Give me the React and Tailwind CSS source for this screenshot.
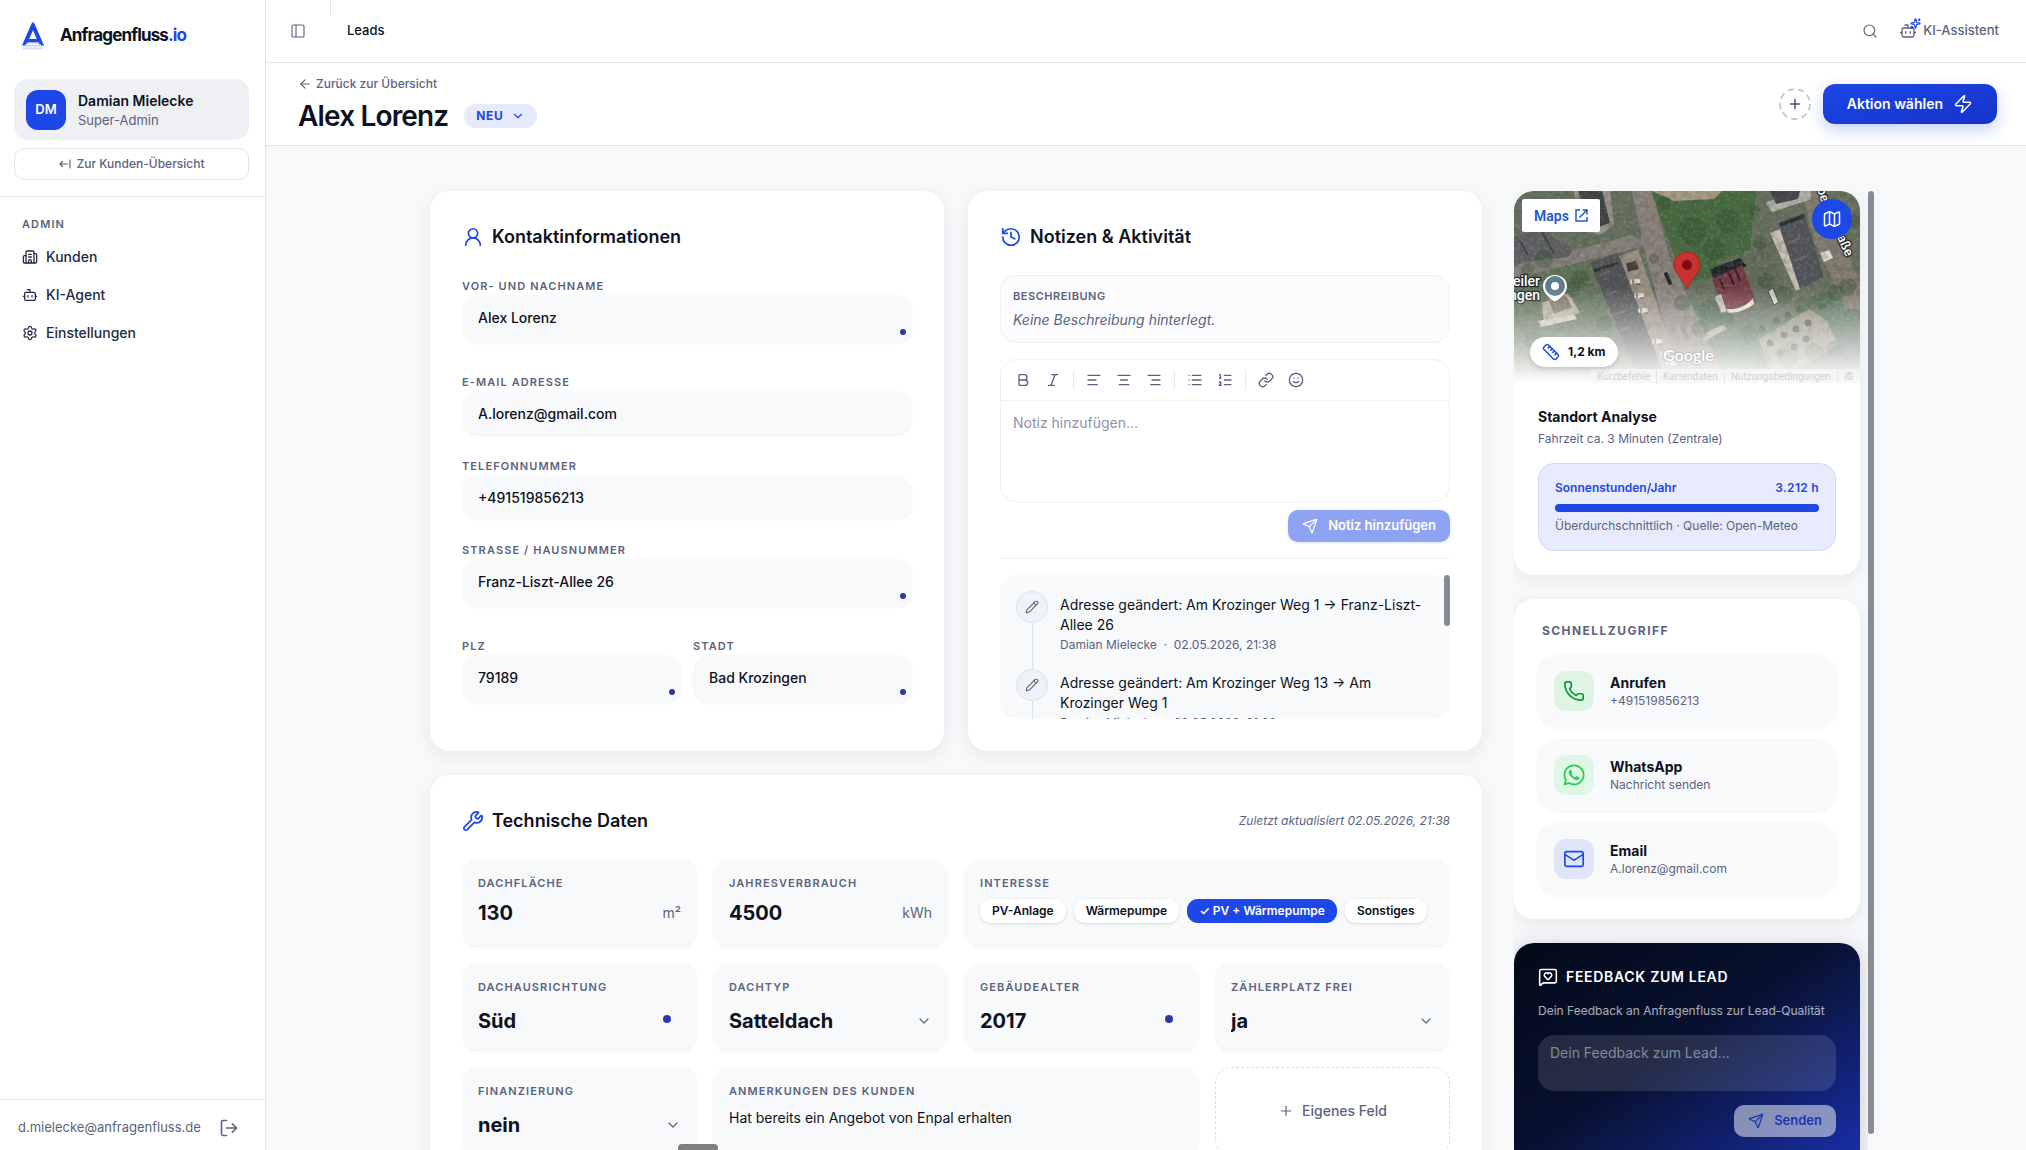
import React from "react";
import {
  AlignCenter, AlignLeft, AlignRight, ArrowLeft, Bold, Bot, Bug, Building2,
  ChevronDown, History, Italic, List, ListOrdered, Link as LinkIcon, LogOut, Mail,
  Map as MapIcon, MessageSquareHeart, PanelLeft, Pencil, Phone, Plus, Ruler, Search, Send,
  Settings, Smile, Sparkles, UserRound, Wrench, Zap,
} from "lucide-react";
import { FaWhatsapp } from "react-icons/fa";

const cardCls = "rounded-[20px] bg-white shadow-[0_4px_16px_rgba(15,23,42,0.07)]";
const labelCls = "block text-[11px] leading-4 font-semibold tracking-[0.1em] text-[#5a6380] uppercase";
const fieldLabelCls = "block pb-0.5 text-[11px] leading-[14px] font-semibold tracking-[0.1em] text-[#5a6380] uppercase";

function Logo() {
  return (
    <svg viewBox="0 0 22 28" className="h-7 w-[22px]" aria-hidden="true">
      <path d="M9.6 1.6 11 0l1.4 1.6L22 23.5h-4.6l-1-3H5.6l-1 3H0L9.6 1.6ZM11 8.2 7.2 17h7.6L11 8.2Z" fill="#1d47e6" fillRule="evenodd" />
      <path d="M4.5 20.6h13v.9h-13z" fill="#b9c6fa" />
      <path d="M3 22.3h16v1H3z" fill="#fff" />
      <path d="M2.5 23.4h17v1h-17z" fill="#a9b8f8" />
      <path d="M1 25.4h20v1.9H1z" fill="#d5ddfc" />
    </svg>
  );
}

function NavItem({ icon: Icon, children }) {
  return (
    <a href="#nav" className="flex h-[38px] items-center gap-2 px-2 text-sm font-medium text-[#232b40]">
      <Icon size={16} strokeWidth={1.9} />
      {children}
    </a>
  );
}

function Sidebar() {
  return (
    <aside className="flex w-[266px] shrink-0 flex-col border-r border-[#e2e4ec] bg-white">
      <div className="flex h-[71px] items-center gap-4 px-[22px]">
        <Logo />
        <span className="text-[17px] font-bold tracking-tighter text-[#0c1222]">
          Anfragenfluss<span className="text-[#1d47e6]">.io</span>
        </span>
      </div>
      <div className="mt-2 flex flex-col gap-2 border-b border-[#e2e4ec] pr-4 pb-4 pl-[14px]">
        <div className="flex h-[61px] items-center gap-3 rounded-[14px] bg-[#eff0f4] px-3">
          <span className="grid size-10 place-items-center rounded-xl bg-[#1d47e6] text-[13px] font-semibold text-white">DM</span>
          <span className="flex flex-col">
            <span className="text-sm font-semibold text-[#0c1222]">Damian Mielecke</span>
            <span className="text-[13px] leading-[18px] text-[#5a6380]">Super-Admin</span>
          </span>
        </div>
        <button className="flex h-8 items-center justify-center gap-1.5 rounded-[10px] border border-[#e2e4ec] text-xs font-medium text-[#5a6380]">
          <svg viewBox="0 0 12 12" className="size-3" fill="none" stroke="currentColor" strokeWidth="1.2" strokeLinecap="round" strokeLinejoin="round"><path d="M8.500 6H1M3.500 3.500 1 6l2.500 2.500M11 2v8" /></svg>
          Zur Kunden-Übersicht
        </button>
      </div>
      <nav className="flex flex-1 flex-col px-[14px] pt-5">
        <p className={fieldLabelCls + " px-2 pb-[7px]"}>Admin</p>
        <NavItem icon={Building2}>Kunden</NavItem>
        <NavItem icon={Bot}>KI-Agent</NavItem>
        <NavItem icon={Settings}>Einstellungen</NavItem>
      </nav>
      <div className="flex h-[51px] items-center justify-between border-t border-[#e2e4ec] pt-1.5 pr-[26px] pl-[18px] text-[#5a6380]">
        <span className="text-[13px]">d.mielecke@anfragenfluss.de</span>
        <button aria-label="Abmelden"><LogOut size={20} strokeWidth={1.9} /></button>
      </div>
    </aside>
  );
}

function TopBar() {
  return (
    <header className="flex h-[63px] shrink-0 items-center border-b border-[#e2e4ec] bg-white pr-[27px] pl-6 text-[#5a6380]">
      <button aria-label="Seitenleiste" className="mr-6"><PanelLeft size={16} strokeWidth={1.7} /></button>
      <span className="h-[15px] w-px self-start bg-[#e2e4ec]" />
      <span className="ml-4 text-[13px] font-medium text-[#0c1222]">Leads</span>
      <button aria-label="Suche" className="ml-auto"><Search size={16} strokeWidth={1.8} /></button>
      <button className="ml-[21px] flex items-center gap-1.5 text-[13px] font-medium">
        <span className="relative">
          <Bot size={18} strokeWidth={1.7} />
          <Sparkles size={11} strokeWidth={2.6} className="absolute -top-1 -right-1 text-[#1d47e6]" />
        </span>
        KI-Assistent
      </button>
    </header>
  );
}

function LeadHeader() {
  return (
    <div className="flex h-[83px] shrink-0 items-center justify-between border-b border-[#e2e4ec] bg-white pr-[29px] pl-8">
      <div>
        <a href="#leads" className="flex items-center gap-1 text-xs font-medium text-[#5a6380]">
          <ArrowLeft size={14} />
          Zurück zur Übersicht
        </a>
        <div className="mt-2 flex items-center gap-4">
          <h1 className="text-[28px] leading-8 font-semibold tracking-[-0.03em] text-[#0c1222]">Alex Lorenz</h1>
          <button className="flex h-6 items-center gap-2 rounded-full bg-[#e7eafd] pr-3 pl-3 text-xs font-bold tracking-wider text-[#1d47e6]">
            NEU <ChevronDown size={14} />
          </button>
        </div>
      </div>
      <div className="flex items-center gap-3">
        <button aria-label="Hinzufügen" className="grid size-8 place-items-center text-[#4a526c]">
          <svg viewBox="0 0 32 32" className="size-8" fill="none">
            <circle cx="16" cy="16" r="15" stroke="#c3c5cc" strokeWidth="1.8" strokeDasharray="6.300 4.170" />
            <path d="M11.500 16h9M16 11.500v9" stroke="currentColor" strokeWidth="1.500" strokeLinecap="round" />
          </svg>
        </button>
        <button className="flex h-10 items-center gap-2.5 rounded-xl bg-linear-to-br from-[#1d47e6] to-[#1632cb] px-6 text-sm font-semibold text-white shadow-[0_6px_16px_rgba(29,71,230,0.25)]">
          Aktion wählen <Zap size={20} strokeWidth={1.8} />
        </button>
      </div>
    </div>
  );
}

function CardTitle({ icon: Icon, children }) {
  return (
    <h2 className="flex h-7 items-center gap-2 text-lg font-semibold text-[#0c1222]">
      <Icon size={22} strokeWidth={1.9} className="text-[#1d47e6]" />
      {children}
    </h2>
  );
}

function Field({ id, label, value, dot }) {
  return (
    <div className={dot ? "pb-2" : ""}>
      <label htmlFor={id} className={fieldLabelCls}>{label}</label>
      <div className={"relative rounded-2xl bg-[#f8f9fb] shadow-[0_1px_2px_rgba(15,23,42,0.06)] " + (dot ? "pb-1" : "")}>
        <input id={id} defaultValue={value} className="block h-11 w-full bg-transparent px-4 text-sm font-medium text-[#0c1222] outline-none" />
        {dot && <span className="absolute right-1.5 bottom-2 size-1.5 rounded-full bg-[#2f37a8]" />}
      </div>
    </div>
  );
}

function ContactCard() {
  return (
    <section className={cardCls + " p-8"}>
      <CardTitle icon={UserRound}>Kontaktinformationen</CardTitle>
      <div className="mt-7 flex flex-col gap-6">
        <Field id="name" label="Vor- und Nachname" value="Alex Lorenz" dot />
        <Field id="mail" label="E-Mail Adresse" value="A.lorenz@gmail.com" />
        <Field id="tel" label="Telefonnummer" value="+491519856213" />
        <Field id="street" label="Strasse / Hausnummer" value="Franz-Liszt-Allee 26" dot />
        <div className="grid grid-cols-2 gap-3">
          <Field id="zip" label="PLZ" value="79189" dot />
          <Field id="city" label="Stadt" value="Bad Krozingen" dot />
        </div>
      </div>
    </section>
  );
}

const tools = [
  ["Fett", Bold], ["Kursiv", Italic], null,
  ["Linksbündig", AlignLeft], ["Zentriert", AlignCenter], ["Rechtsbündig", AlignRight], null,
  ["Liste", List], ["Nummerierte Liste", ListOrdered], null,
  ["Link", LinkIcon], ["Emoji", Smile],
];

function TimelineItem({ children }) {
  return (
    <li className="flex h-[78px] gap-3">
      <span className="flex flex-col items-center">
        <span className="grid size-8 shrink-0 place-items-center rounded-full border border-[#dde1ea] bg-[#eff2f8] text-[#5a6380]">
          <Pencil size={14} strokeWidth={1.8} />
        </span>
        <span className="w-px flex-1 bg-[#dde1ea]" />
      </span>
      <div className="pt-1">
        <p className="text-sm text-[#0c1222]">{children}</p>
        <p className="mt-0.5 text-xs text-[#5a6380]">Damian Mielecke&nbsp; ·&nbsp; 02.05.2026, 21:38</p>
      </div>
    </li>
  );
}

function NotesCard() {
  return (
    <section className={cardCls + " p-8"}>
      <CardTitle icon={History}>Notizen &amp; Aktivität</CardTitle>
      <div className="mt-6 rounded-2xl border border-[#eff0f4] bg-[#fcfcfe] px-3 pt-3 pb-3">
        <p className="text-[11px] leading-4 font-semibold tracking-wider text-[#5a6380]">BESCHREIBUNG</p>
        <p className="mt-1.5 text-sm text-[#5a6380] italic">Keine Beschreibung hinterlegt.</p>
      </div>
      <div className="mt-4 overflow-hidden rounded-2xl border border-[#eff0f4]">
        <div className="flex items-center gap-0.5 border-b border-[#eff0f4] px-2 py-1.5 text-[#5a6380]">
          {tools.map((t, i) => {
            if (!t) return <span key={i} className="mx-1 h-5 w-px bg-[#e6e8ee]" />;
            const Icon = t[1];
            return (
              <button key={i} aria-label={t[0]} className="grid size-7 place-items-center">
                <Icon size={16} />
              </button>
            );
          })}
        </div>
        <textarea aria-label="Notiz" placeholder="Notiz hinzufügen…" className="block h-[100px] w-full resize-none px-3 py-3 text-sm outline-none placeholder:text-[#8d93a8]" />
      </div>
      <div className="mt-2 flex justify-end border-b border-[#f1f2f6] pb-4">
        <button className="flex h-8 items-center gap-2.5 rounded-[10px] bg-[#8fa3f3] px-3.5 text-[13px] font-semibold text-white shadow-[0_1px_3px_rgba(29,71,230,0.15)]">
          <Send size={16} strokeWidth={1.8} /> Notiz hinzufügen
        </button>
      </div>
      <div className="relative mt-4">
        <ul className="h-36 overflow-hidden rounded-2xl bg-[#f8f9fb] py-4 pr-[22px] pl-4">
          <TimelineItem>Adresse geändert: Am Krozinger Weg 1 → Franz-Liszt-Allee 26</TimelineItem>
          <TimelineItem>Adresse geändert: Am Krozinger Weg 13 → Am Krozinger Weg 1</TimelineItem>
        </ul>
        <span className="absolute top-0 right-0 h-[51px] w-1.5 rounded-full bg-[#868b94]" />
      </div>
    </section>
  );
}

function Tile({ label, htmlFor, className = "", children }) {
  return (
    <div className={"min-h-[88px] rounded-2xl bg-[#f8f9fb] px-4 pt-4 shadow-[0_1px_2px_rgba(15,23,42,0.05)] " + className}>
      <label htmlFor={htmlFor} className={labelCls + " mb-2"}>{label}</label>
      {children}
    </div>
  );
}

const valueCls = "w-full min-w-0 appearance-none bg-transparent text-xl font-bold text-[#0c1222] outline-none";

function NumberTile({ id, label, value, unit }) {
  return (
    <Tile label={label} htmlFor={id}>
      <div className="flex items-center">
        <input id={id} defaultValue={value} className={valueCls + " h-7"} />
        <span className="text-sm text-[#5a6380]">{unit}</span>
      </div>
    </Tile>
  );
}

function SelectTile({ id, label, value }) {
  return (
    <Tile label={label} htmlFor={id}>
      <div className="relative flex h-9 items-center">
        <select id={id} defaultValue={value} className={valueCls}><option>{value}</option></select>
        <ChevronDown size={16} className="pointer-events-none absolute right-0 text-[#5a6380]" strokeWidth={1.8} />
      </div>
    </Tile>
  );
}

function DotTile({ id, label, value }) {
  return (
    <Tile label={label} htmlFor={id}>
      <div className="flex h-9 items-center pr-2.5">
        <input id={id} defaultValue={value} className={valueCls} />
        <span className="mb-1 size-2 shrink-0 rounded-full bg-[#2f37a8]" />
      </div>
    </Tile>
  );
}

const chipCls = "h-6 rounded-[11px] px-3 text-xs font-semibold whitespace-nowrap ";

function TechCard() {
  return (
    <section className={cardCls + " p-8"}>
      <div className="flex items-center justify-between">
        <CardTitle icon={Wrench}>Technische Daten</CardTitle>
        <span className="text-xs text-[#5a6380] italic">Zuletzt aktualisiert 02.05.2026, 21:38</span>
      </div>
      <div className="mt-6 grid grid-cols-4 gap-4">
        <NumberTile id="area" label="Dachfläche" value="130" unit="m²" />
        <NumberTile id="usage" label="Jahresverbrauch" value="4500" unit="kWh" />
        <div className="col-span-2 min-h-[88px] rounded-2xl bg-[#f8f9fb] px-4 pt-4 shadow-[0_1px_2px_rgba(15,23,42,0.05)]">
          <p className={labelCls + " mb-2"}>Interesse</p>
          <div className="flex gap-2">
            {["PV-Anlage", "Wärmepumpe", "✓ PV + Wärmepumpe", "Sonstiges"].map((c, i) => (
              <button key={c} className={chipCls + (i === 2 ? "bg-[#1d47e6] text-white" : "bg-white text-[#0c1222] shadow-[0_1px_3px_rgba(15,23,42,0.14)]")}>{c}</button>
            ))}
          </div>
        </div>
        <DotTile id="direction" label="Dachausrichtung" value="Süd" />
        <SelectTile id="rooftype" label="Dachtyp" value="Satteldach" />
        <DotTile id="age" label="Gebäudealter" value="2017" />
        <SelectTile id="meter" label="Zählerplatz frei" value="ja" />
        <SelectTile id="finance" label="Finanzierung" value="nein" />
        <Tile label="Anmerkungen des Kunden" htmlFor="remarks" className="col-span-2">
          <textarea id="remarks" rows={1} defaultValue="Hat bereits ein Angebot von Enpal erhalten" className="block w-full resize-none bg-transparent text-sm leading-[22px] text-[#0c1222] outline-none" />
        </Tile>
        <button className="flex min-h-[88px] items-center justify-center gap-2 rounded-2xl border border-dashed border-[#dcdee6] text-sm font-medium text-[#5a6380]">
          <Plus size={16} strokeWidth={1.7} /> Eigenes Feld
        </button>
      </div>
    </section>
  );
}

const trees = [
  [30, 68, 9], [14, 78, 6], [66, 88, 9], [58, 98, 8], [90, 132, 8], [20, 150, 10], [60, 155, 9], [42, 168, 8],
  [196, 120, 11], [186, 138, 9], [212, 128, 8], [168, 112, 8], [246, 52, 7], [252, 90, 8], [270, 104, 9], [235, 144, 9],
  [288, 114, 8], [300, 112, 7], [312, 108, 8], [322, 102, 8], [334, 96, 9], [340, 30, 7], [240, 20, 6], [140, 68, 5],
  [250, 172, 9], [274, 168, 10], [300, 162, 10], [320, 158, 8], [150, 12, 7], [214, 30, 12], [178, 40, 14], [200, 58, 11],
];

const orchard = [
  [248, 138], [262, 130], [274, 124], [286, 118], [256, 152], [270, 144], [282, 138], [294, 132], [308, 116], [266, 162], [280, 156], [292, 148],
];

function SatelliteMap() {
  return (
    <svg viewBox="0 0 346 192" preserveAspectRatio="xMidYMid slice" className="h-full w-full" aria-label="Satellitenkarte" fontFamily="Roboto, sans-serif">
      <defs>
        <filter id="ground" x="0" y="0" width="100%" height="100%">
          <feTurbulence type="fractalNoise" baseFrequency="0.16" numOctaves="4" seed="7" />
          <feColorMatrix values="0 0 0 0 0.06  0 0 0 0 0.08  0 0 0 0 0.05  1.900 0 0 0 -0.750" />
        </filter>
        <filter id="light" x="0" y="0" width="100%" height="100%">
          <feTurbulence type="fractalNoise" baseFrequency="0.3" numOctaves="3" seed="21" />
          <feColorMatrix values="0 0 0 0 0.8  0 0 0 0 0.78  0 0 0 0 0.7  0 1.600 0 0 -0.800" />
        </filter>
      </defs>
      <rect width="346" height="192" fill="#666f5e" />
      <path d="M138 0h104l-6 60-40 28-26 2-26-70Z" fill="#46693f" />
      <path d="M0 90 80 70l30 110H0Z" fill="#5f7058" />
      <path d="M165 110l90 20 91-40v102H190Z" fill="#587058" />
      <path d="M205 70l55-20 10 60-50 25Z" fill="#626b5a" />
      <path d="M138 0h70l-8 8-40 2Z" fill="#a89a84" />
      <path d="M245 148l50-30 18 12 14 30-70 26Z" fill="#989180" />
      <path d="M0 75 118 44l16 10L0 88Z" fill="#857e7a" />
      <path d="M118 0h20l18 68 58 124h-48L132 66Z" fill="#8a817c" />
      <path d="M288 0h20l38 92v26h-14L300 50Z" fill="#82796f" />
      <path d="M98 68l26-10 40 116-28 12Z" fill="#9a8d80" />
      <path d="M60 0h36l4 34-14 10-20-6Z" fill="#96908a" />
      <path d="M64 0h24l8 32-18 6Z" fill="#3f4145" />
      <path d="M0 46l26-8 34 20-6 8L0 72Z" fill="#5e5e64" />
      <path d="M26 38l14 24M6 50l8 14" stroke="#3c3d42" strokeWidth="1.500" />
      <path d="M76 72l28-10 44 116-24 8Z" fill="#515156" />
      <path d="M80 80l24-8" stroke="#303135" strokeWidth="3" />
      <path d="M86 84l10-4M92 104l10-4M100 124l10-4M106 140l10-4" stroke="#66676d" strokeWidth="2" />
      <path d="M28 112l26-10 12 20-36 10Z" fill="#bdb3a2" />
      <path d="M35 110l16-6 7 12-18 7Z" fill="#82796c" />
      <path d="M24 130l36-7 3 5-36 8Z" fill="#d3cbbd" />
      <path d="M112 72l10-2 3 8-11 3Z" fill="#403f3d" />
      {[[116, 88], [120, 102], [124, 117], [138, 148], [146, 160], [152, 170]].map(([x, y]) => (
        <g key={y}>
          <rect x={x} y={y} width="10" height="5" rx="2" fill="#dcdad5" />
          <path d={`M${x + 3} ${y}v5M${x + 6} ${y + 5}h4`} stroke="#45454a" />
        </g>
      ))}
      <path d="M152 83l4 9" stroke="#22242b" strokeWidth="4" strokeLinecap="round" />
      <path d="M169 138l4 9" stroke="#6d6a6b" strokeWidth="4" strokeLinecap="round" />
      <path d="M196 78l30-11 7 8-33 14Z" fill="#202329" />
      <path d="M198 88l30-14 14 36-32 11Z" fill="#743743" />
      <path d="M206 88l4 10M214 80l6 14M220 76l6 14" stroke="#341b24" strokeWidth="2" />
      <path d="M201 106l6-3 6 18-6 1Z" fill="#cdc6ba" />
      <path d="M213 118c10 1 20-3 26-11l1 6c-6 5-16 9-26 9Z" fill="#f0e5c9" />
      <path d="M188 144l22-11 3 5-23 12Z" fill="#b5aa9a" />
      <path d="M252 12l28-12h16l2 8-40 13Z" fill="#b5b0aa" />
      <path d="M256 0h30l-2 8-22 5Z" fill="#45464b" />
      <path d="M256 42l10-4 24 58-8 4Z" fill="#c8bfb1" />
      <path d="M264 32l26-10 20 64-24 12Z" fill="#52535a" />
      <path d="M266 34l24-9" stroke="#2d2e34" strokeWidth="4" />
      <path d="M274 52l12-5M280 70l12-5" stroke="#6c6d74" strokeWidth="2" />
      <path d="M254 100l5-3 6 14-5 3Z" fill="#ddd9d0" stroke="#373a3a" />
      <path d="M306 62l9-3 4 8-9 4Z" fill="#ddd9d2" />
      <path d="M300 168l46-28v52h-40Z" fill="#66686b" />
      <g fill="#2f4a2e">{trees.map(([x, y, r]) => <circle key={x + "-" + y} cx={x} cy={y} r={r} opacity="0.35" />)}</g>
      <g fill="#3a5037">{orchard.map(([x, y]) => <circle key={x + "-" + y} cx={x} cy={y} r="3.500" />)}</g>
      <rect width="346" height="192" filter="url(#ground)" opacity="0.4" />
      <rect width="346" height="192" filter="url(#light)" opacity="0.3" />
      <g fill="#fff" stroke="#26282c" strokeWidth="2.500" paintOrder="stroke" fontSize="13" fontWeight="500">
        <text x="26" y="95" textAnchor="end" fontSize="14">eiler</text>
        <text x="26" y="109" textAnchor="end" fontSize="14">ngen</text>
        <text transform="translate(303 -2) rotate(72)">be</text>
        <text transform="translate(323 46) rotate(66)">aße</text>
      </g>
      <path d="M41 84c-7 0-12 5-12 11 0 7 6 11 9 14q3 2 6 0c3-3 9-7 9-14 0-6-5-11-12-11Z" fill="#fff" />
      <circle cx="41" cy="95" r="10" fill="#607d8b" />
      <circle cx="41" cy="95" r="4" fill="#fff" />
      <path d="M173 61c-7.500 0-13 5.500-13 13 0 9 9 13 13 24 4-11 13-15 13-24 0-7.500-5.500-13-13-13Z" fill="#cb322f" stroke="#a3211f" strokeWidth="0.800" />
      <circle cx="173" cy="74" r="5" fill="#7d0c12" />
    </svg>
  );
}

function LocationCard() {
  return (
    <section className={cardCls + " overflow-hidden"}>
      <div className="relative h-48">
        <SatelliteMap />
        <span className="absolute inset-x-0 bottom-0 h-24 bg-linear-to-t from-white to-transparent" />
        <span className="absolute right-0 bottom-0 flex h-3.5 items-center bg-[#f6f6f6]/80 font-[Roboto] text-[10px] text-[#d2d2d2] *:px-1.5">
          <span>Kurzbefehle</span>
          <span className="border-l border-[#e6e6e6]">Kartendaten</span>
          <span className="border-l border-[#e6e6e6]">Nutzungsbedingungen</span>
          <span className="border-l border-[#e6e6e6]"><Bug size={10} /></span>
        </span>
        <span className="absolute bottom-[18px] left-[149px] font-[Lato] text-base leading-5 font-bold text-white [text-shadow:0_0_2px_rgba(0,0,0,0.35)]">Google</span>
        <a href="#maps" className="absolute top-2 left-2 flex h-[33px] items-center gap-1.5 rounded-xs bg-white px-3 font-[Roboto] text-sm font-semibold text-[#2258c7]">
          Maps
          <svg viewBox="0 0 13 13" className="size-[13px]" fill="none" stroke="currentColor" strokeWidth="1.500"><path d="M5 1H1v11h11V8M7.500 1H12v4.500M12 1 4.500 8.500" /></svg>
        </a>
        <button aria-label="Karte" className="absolute top-2 right-2 grid size-10 place-items-center rounded-full bg-[#1d47e6] text-white"><MapIcon size={20} strokeWidth={1.8} /></button>
        <span className="absolute bottom-4 left-4 flex h-[30px] items-center gap-2 rounded-full bg-white px-3 text-xs font-bold text-[#0c1222] shadow-md">
          <Ruler size={18} strokeWidth={1.9} className="text-[#1d47e6]" /> 1,2 km
        </span>
      </div>
      <div className="p-6">
        <h3 className="text-sm font-bold text-[#0c1222]">Standort Analyse</h3>
        <p className="mt-1 text-xs text-[#5a6380]">Fahrzeit ca. 3 Minuten (Zentrale)</p>
        <div className="mt-4 rounded-2xl border border-[#d0d8fb] bg-[#e8ebfc] p-4">
          <div className="flex justify-between text-xs font-semibold text-[#1d47e6]"><span>Sonnenstunden/Jahr</span><span className="tracking-wide">3.212 h</span></div>
          <div className="mt-2 h-2 rounded-full bg-[#1d47e6]" />
          <p className="mt-1.5 text-xs text-[#5a6380]">Überdurchschnittlich · Quelle: Open-Meteo</p>
        </div>
      </div>
    </section>
  );
}

function QuickLink({ icon, tone, title, sub }) {
  return (
    <a href="#kontakt" className="flex h-[72px] items-center gap-4 rounded-[20px] bg-[#f8f9fb] px-4 shadow-[0_1px_4px_rgba(15,23,42,0.05)]">
      <span className={"grid size-10 place-items-center rounded-xl " + tone}>{icon}</span>
      <span className="flex flex-col">
        <span className="text-sm font-bold text-[#0c1222]">{title}</span>
        <span className="text-xs text-[#5a6380]">{sub}</span>
      </span>
    </a>
  );
}

function QuickAccess() {
  return (
    <section className={cardCls + " p-6"}>
      <h3 className="px-1 text-xs font-bold tracking-[0.12em] text-[#5a6380]">SCHNELLZUGRIFF</h3>
      <div className="mt-4 flex flex-col gap-3">
        <QuickLink title="Anrufen" sub="+491519856213" tone="bg-[#def4e4] text-[#119a3c]" icon={<Phone size={22} strokeWidth={1.9} />} />
        <QuickLink title="WhatsApp" sub="Nachricht senden" tone="bg-[#e0f6e7] text-[#25d051]" icon={<FaWhatsapp size={24} />} />
        <QuickLink title="Email" sub="A.lorenz@gmail.com" tone="bg-[#e0e5fa] text-[#1d47e6]" icon={<Mail size={22} strokeWidth={1.8} />} />
      </div>
    </section>
  );
}

function Feedback() {
  return (
    <section className="rounded-[20px] bg-linear-to-br from-[#020a18] via-[#081030] via-45% to-[#1a30b4] p-6 pb-10 text-white shadow-[0_4px_24px_rgba(15,23,42,0.2)]">
      <h3 className="flex items-center gap-2 text-sm font-semibold tracking-wider"><MessageSquareHeart size={20} strokeWidth={1.9} />FEEDBACK ZUM LEAD</h3>
      <label htmlFor="feedback" className="mt-4 block text-xs text-white/65">Dein Feedback an Anfragenfluss zur Lead-Qualität</label>
      <textarea id="feedback" placeholder="Dein Feedback zum Lead…" className="mt-4 block h-14 w-full resize-none rounded-2xl bg-white/12 px-3 py-2 text-sm outline-none placeholder:text-white/45" />
      <div className="mt-3.5 flex justify-end">
        <button className="flex h-8 items-center gap-2.5 rounded-[10px] bg-white/50 px-3.5 text-[13px] font-semibold text-[#1a37b0]"><Send size={16} strokeWidth={1.8} />Senden</button>
      </div>
    </section>
  );
}

export default function App() {
  return (
    <div className="relative flex h-screen overflow-hidden bg-[#f7f8fa] font-[Inter,sans-serif]">
      <Sidebar />
      <div className="flex min-w-0 flex-1 flex-col">
        <TopBar />
        <LeadHeader />
        <main className="flex min-h-0 flex-1 overflow-hidden">
          <div className="mx-auto flex w-full max-w-[1456px] gap-8 pt-[45px] pl-3">
            <div className="flex min-w-0 flex-1 flex-col gap-6">
              <div className="grid grid-cols-2 gap-6">
                <ContactCard />
                <NotesCard />
              </div>
              <TechCard />
            </div>
            <div className="flex w-[360px] shrink-0">
              <div className="flex min-w-0 flex-1 flex-col gap-6 overflow-hidden pr-2 *:shrink-0">
                <LocationCard />
                <QuickAccess />
                <Feedback />
              </div>
              <span className="mb-4 w-1.5 rounded-full bg-[#868b94]" />
            </div>
          </div>
        </main>
      </div>
      <span className="absolute bottom-0 left-[678px] h-1.5 w-10 rounded-t-sm bg-[#808080]" />
    </div>
  );
}
